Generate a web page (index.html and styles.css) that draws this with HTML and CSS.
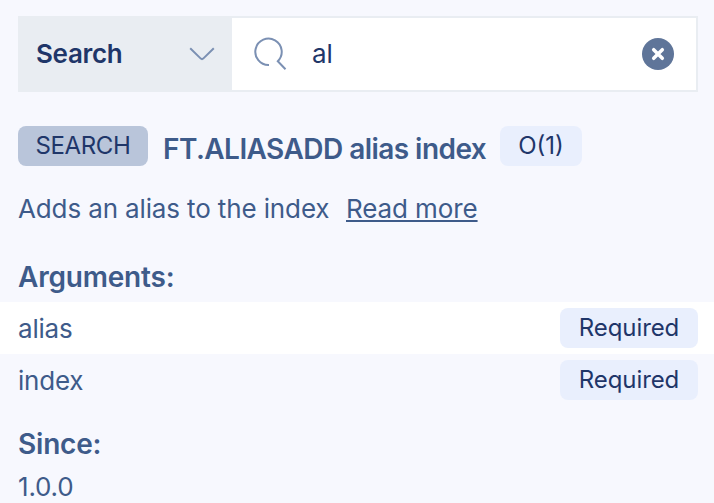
FILE: index.html
```html
<!DOCTYPE html>
<html lang="en">
<head>
<meta charset="utf-8">
<title>Command helper</title>
<link rel="stylesheet" href="styles.css">
</head>
<body>
<main class="panel">
  <div class="search-bar">
    <div class="filter">
      <span class="filter-label">Search</span>
      <svg class="chevron" width="26" height="16" viewBox="0 0 26 16"><path d="M1.2 2.2 11.8 12.6Q13 13.6 14.2 12.6L24.8 2.2"/></svg>
    </div>
    <div class="field">
      <svg class="lens" width="34" height="34" viewBox="0 0 34 34"><path d="M16 28A13.2 13.2 0 1 1 24.8 24.2L32.5 32.3"/></svg>
      <span class="query">al</span>
      <svg class="clear" width="32" height="32" viewBox="0 0 32 32"><circle cx="16" cy="16" r="16"/><path d="M11.7 11.7 20.3 20.3M20.3 11.7 11.7 20.3"/></svg>
    </div>
  </div>
  <header class="command">
    <span class="badge group">SEARCH</span>
    <h1 class="title">FT.ALIASADD alias index</h1>
    <span class="badge complexity">O(1)</span>
  </header>
  <p class="summary"><span class="summary-text">Adds an alias to the index</span><a class="link">Read more</a></p>
  <h2 class="heading arguments">Arguments:</h2>
  <div class="row white"><span class="argument">alias</span><span class="badge required">Required</span></div>
  <div class="row"><span class="argument">index</span><span class="badge required">Required</span></div>
  <h2 class="heading since">Since:</h2>
  <p class="version">1.0.0</p>
</main>
</body>
</html>
```

FILE: styles.css
```css
* { box-sizing: border-box; }
body {
  margin: 0;
  height: 503px;
  overflow: hidden;
  background: #f7f8fe;
  color: #3e5b8a;
  font: 400 26px/32px Inter, "Liberation Sans", sans-serif;
  white-space: nowrap;
}
h1, h2, p { margin: 0; }
.panel { padding-top: 16px; }
.search-bar {
  display: flex;
  height: 76px;
  margin: 0 16px 0 18px;
  border: 2px solid #e9edf2;
  background: #fff;
  color: #1f3669;
}
.filter {
  display: flex;
  align-items: center;
  justify-content: space-between;
  width: 212px;
  padding: 0 17px 0 16px;
  background: #e9edf2;
}
.filter-label { font-weight: 600; letter-spacing: -0.3px; }
.chevron, .lens { fill: none; stroke: #7b90b3; stroke-width: 2; }
.field { display: flex; flex: 1; align-items: center; padding: 0 22px 0 21px; }
.query { flex: 1; margin-left: 25px; }
.clear circle { fill: #5f7599; }
.clear path { stroke: #fff; stroke-width: 3.5; stroke-linecap: round; }
.command { display: flex; margin: 34px 0 0 18px; height: 40px; }
.badge {
  display: flex;
  justify-content: center;
  height: 40px;
  border-radius: 8px;
  background: #e9effd;
  color: #1f3669;
  font-size: 24px;
  line-height: 40px;
}
.group { width: 130px; background: #b9c5da; letter-spacing: -0.4px; }
.complexity { width: 82px; }
.required { width: 138px; letter-spacing: -0.1px; }
.title {
  width: 352px;
  padding-left: 15px;
  font-size: 28px;
  font-weight: 600;
  line-height: 46px;
  letter-spacing: -0.55px;
}
.summary { display: flex; margin: 27px 0 0 18px; }
.summary-text { width: 328px; letter-spacing: -0.13px; }
.link {
  letter-spacing: -0.1px;
  text-decoration: underline;
  text-decoration-thickness: 2px;
  text-underline-offset: 2px;
  text-decoration-skip-ink: none;
}
.heading { margin-left: 18px; font-size: 28px; font-weight: 600; line-height: 36px; letter-spacing: -0.2px; }
.arguments { margin-top: 34px; height: 43px; }
.row {
  display: flex;
  align-items: center;
  justify-content: space-between;
  height: 52px;
  padding: 0 16px 0 18px;
}
.argument { padding-top: 2px; letter-spacing: -0.2px; }
.white { background: #fff; }
.since { margin-top: 20px; }
.version { margin: 9px 0 0 18px; letter-spacing: -0.2px; }
```
